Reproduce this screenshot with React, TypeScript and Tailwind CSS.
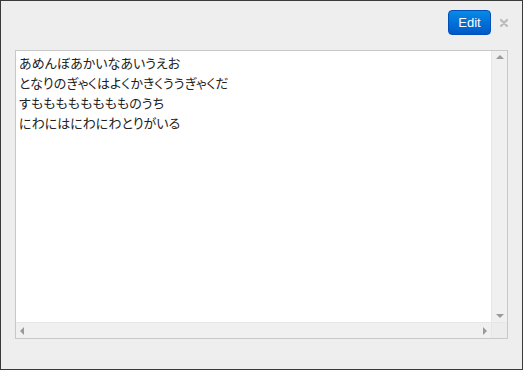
export default function App() {
  const lines = [
    "あめんぼあかいなあいうえお",
    "となりのぎゃくはよくかきくううぎゃくだ",
    "すもももももももものうち",
    "にわにはにわにわとりがいる",
  ];
  return (
    <div className="w-[523px] h-[370px] border border-[#3a3a3a] bg-[#eeeeee] flex flex-col font-['Liberation_Sans',sans-serif]">
      {/* header */}
      <div className="flex justify-end items-center pt-[9px] pr-[14px]">
        <button className="w-[43px] h-[25px] rounded-[4px] border border-[#0050b8] bg-gradient-to-b from-[#0a8ae6] to-[#0058c8] text-white text-[13px] leading-none">
          Edit
        </button>
        <svg className="ml-[9px]" width="8" height="8" viewBox="0 0 8 8">
          <path d="M1 1L7 7M7 1L1 7" stroke="#bdbdbd" strokeWidth="2.4" strokeLinecap="round" />
        </svg>
      </div>

      {/* text area */}
      <div className="mt-[15px] ml-[14px] w-[493px] h-[289px] border border-[#c8c8c8] bg-white flex flex-col">
        <div className="flex flex-1 min-h-0">
          <div className="flex-1 pl-[3px] pt-[2px] text-[13px] leading-[20px] text-[#222] font-['Noto_Sans_CJK_JP',sans-serif] [font-feature-settings:'palt']">
            {lines.map((l) => (
              <div key={l}>{l}</div>
            ))}
          </div>
          {/* vertical scrollbar */}
          <div className="w-[16px] bg-[#f0f0f0] border-l border-[#e6e6e6] flex flex-col justify-between items-center py-[4px]">
            <div className="w-0 h-0 border-l-[4px] border-r-[4px] border-b-[4px] border-l-transparent border-r-transparent border-b-[#9a9a9a]" />
            <div className="w-0 h-0 border-l-[4px] border-r-[4px] border-t-[4px] border-l-transparent border-r-transparent border-t-[#9a9a9a]" />
          </div>
        </div>
        {/* horizontal scrollbar */}
        <div className="flex h-[16px]">
          <div className="flex-1 bg-[#f0f0f0] border-t border-[#e6e6e6] flex justify-between items-center px-[4px]">
            <div className="w-0 h-0 border-t-[4px] border-b-[4px] border-r-[4px] border-t-transparent border-b-transparent border-r-[#9a9a9a]" />
            <div className="w-0 h-0 border-t-[4px] border-b-[4px] border-l-[4px] border-t-transparent border-b-transparent border-l-[#9a9a9a]" />
          </div>
          <div className="w-[16px] bg-[#ececec] border-t border-l border-[#e6e6e6]" />
        </div>
      </div>
    </div>
  );
}
